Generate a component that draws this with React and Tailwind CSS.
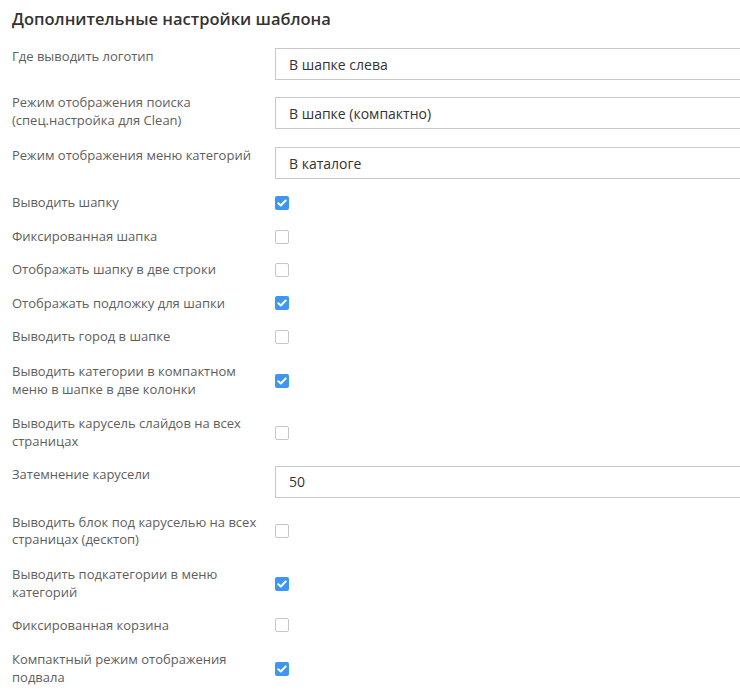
import React from "react";

const rows = [
  { label: "Где выводить логотип", type: "input", value: "В шапке слева", mt: "mt-[18px]" },
  { label: "Режим отображения поиска (спец.настройка для Clean)", type: "input", value: "В шапке (компактно)", mt: "mt-[14px]", inputMt: "mt-[3px]" },
  { label: "Режим отображения меню категорий", type: "input", value: "В каталоге", mt: "mt-[18px]" },
  { label: "Выводить шапку", type: "check", checked: true, mt: "mt-[15px]" },
  { label: "Фиксированная шапка", type: "check", checked: false, mt: "mt-[16px]" },
  { label: "Отображать шапку в две строки", type: "check", checked: false, mt: "mt-[15px]" },
  { label: "Отображать подложку для шапки", type: "check", checked: true, mt: "mt-[16px]" },
  { label: "Выводить город в шапке", type: "check", checked: false, mt: "mt-[16px]" },
  { label: "Выводить категории в компактном меню в шапке в две колонки", type: "check", checked: true, mt: "mt-[17px]" },
  { label: "Выводить карусель слайдов на всех страницах", type: "check", checked: false, mt: "mt-[17px]" },
  { label: "Затемнение карусели", type: "input", value: "50", mt: "mt-[15px]" },
  { label: "Выводить блок под каруселью на всех страницах (десктоп)", type: "check", checked: false, mt: "mt-[16px]" },
  { label: "Выводить подкатегории в меню категорий", type: "check", checked: true, mt: "mt-[17px]" },
  { label: "Фиксированная корзина", type: "check", checked: false, mt: "mt-[15px]" },
  { label: "Компактный режим отображения подвала", type: "check", checked: true, mt: "mt-[17px]" },
];

function Check({ checked }) {
  if (checked) {
    return (
      <span className="flex h-[14px] w-[14px] items-center justify-center rounded-[2px] bg-[#3d97f2]">
        <svg width="10" height="8" viewBox="0 0 10 8" fill="none">
          <path d="M1.3 4.2 L3.8 6.5 L8.7 1.5" stroke="#ffffff" strokeWidth="2" strokeLinecap="round" strokeLinejoin="round" />
        </svg>
      </span>
    );
  }
  return <span className="block h-[14px] w-[14px] rounded-[2px] border border-[#c6c6c6] bg-white" />;
}

export default function App() {
  return (
    <div className="h-[694px] w-[740px] overflow-hidden bg-white font-['Open_Sans',sans-serif]">
      <div className="pt-[7px] pl-[12px] text-[16.5px] font-semibold leading-[23px] text-[#333333]">
        Дополнительные настройки шаблона
      </div>
      <div className="flex flex-col">
        {rows.map((r, i) => (
          <div
            key={i}
            className={`flex ${r.type === "check" ? "items-center" : "items-start"} ${r.mt}`}
          >
            <div className="ml-[12px] w-[255px] shrink-0 text-[13px] leading-[17.7px] text-[#5e5e5e]">
              {r.label}
            </div>
            <div className="ml-[8px] shrink-0">
              {r.type === "input" ? (
                <div
                  className={`flex h-[32px] w-[480px] items-center border border-[#c9c9c9] pl-[13px] text-[14px] text-[#333333] ${r.inputMt || ""}`}
                >
                  {r.value}
                </div>
              ) : (
                <Check checked={r.checked} />
              )}
            </div>
          </div>
        ))}
      </div>
    </div>
  );
}
